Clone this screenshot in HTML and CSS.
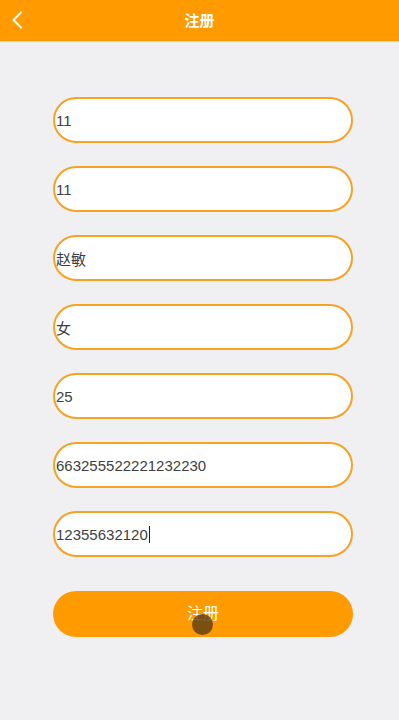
FILE: index.html
```html
<!DOCTYPE html>
<html lang="zh-CN">
<head>
    <meta charset="UTF-8">
    <meta name="viewport" content="width=device-width, initial-scale=1.0">
    <title>注册</title>
    <link rel="stylesheet" href="styles.css">
</head>
<body>
    <div class="header">
        <span class="back">
            <svg width="12" height="18" viewBox="0 0 12 18"><path d="M10 1.5 L2.5 9 L10 16.5" fill="none" stroke="#fff" stroke-width="2" stroke-linecap="round" stroke-linejoin="round"/></svg>
        </span>
        <h1>注册</h1>
    </div>
    <form class="register">
        <input class="field" type="text" value="11">
        <input class="field" type="text" value="11">
        <input class="field" type="text" value="赵敏">
        <input class="field" type="text" value="女">
        <input class="field" type="text" value="25">
        <input class="field" type="text" value="663255522221232230">
        <div class="field">12355632120<span class="caret"></span></div>
        <button type="button" class="submit">注册<span class="touch"></span></button>
    </form>
</body>
</html>
```

FILE: styles.css
```css
body {
    margin: 0;
    background-color: #f0eff2;
    font-family: "Liberation Sans", "Noto Sans CJK SC", sans-serif;
    height: 720px;
}
.header {
    height: 42px;
    background-color: #ff9a00;
    display: flex;
    align-items: center;
    justify-content: center;
    position: relative;
    border-bottom: 1px solid #f5d9a8;
    box-sizing: border-box;
}
.header h1 {
    margin: 0 0 3px;
    color: #fff;
    font-size: 15px;
    font-weight: bold;
}
.back {
    position: absolute;
    left: 11px;
    top: 11px;
    display: flex;
}
.register {
    display: flex;
    flex-direction: column;
    gap: 23px;
    padding: 55px 46px 0 53px;
}
.field {
    box-sizing: border-box;
    height: 46px;
    width: 300px;
    margin: 0;
    padding: 0 0 0 1px;
    border: 2px solid #f6a225;
    border-radius: 23px;
    background: #fff;
    font-family: "Liberation Sans", "Noto Sans CJK SC", sans-serif;
    font-size: 15px;
    color: #3d3f44;
    outline: none;
    display: flex;
    align-items: center;
}
.caret {
    display: inline-block;
    width: 1px;
    height: 17px;
    background: #222;
    margin-left: 1px;
}
.submit {
    position: relative;
    margin-top: 11px;
    height: 46px;
    width: 300px;
    border: none;
    border-radius: 23px;
    background-color: #ff9a00;
    color: #fff;
    font-family: "Liberation Sans", "Noto Sans CJK SC", sans-serif;
    font-size: 16px;
    padding: 0;
    padding-bottom: 4px;
}
.touch {
    position: absolute;
    left: 139px;
    top: 23px;
    width: 21px;
    height: 21px;
    border-radius: 50%;
    background: rgba(90, 60, 20, 0.8);
}
```
